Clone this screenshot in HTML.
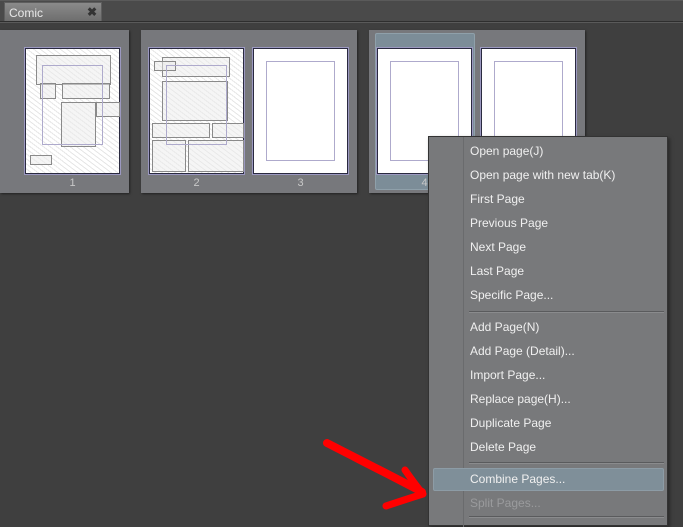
<!DOCTYPE html>
<html><head><style>
*{margin:0;padding:0;box-sizing:border-box}
body{width:683px;height:520px;overflow:hidden;background:#3f3f3f;font-family:"Liberation Sans",sans-serif;position:relative}
.abs{position:absolute}
.tabbar{left:0;top:0;width:683px;height:21px;background:#4a4a4a;border-top:1px solid #5a5a5a}
.tab{left:4px;top:2px;width:98px;height:20px;background:linear-gradient(#8a8a8a,#6e6e6e);border:1px solid #5e5e5e;color:#e8e8e8;font-size:12px;padding:3px 0 0 4px}
.tabline{left:0;top:21px;width:683px;height:2px;background:#2e2e2e;border-bottom:1px solid #5a5a5a}
.spread{background:#77787c;box-shadow:1px 1px 2px #222}
.page{background:#fff;border:1px solid #2a2a40;outline:1px solid #9b98c0}
.inner{position:absolute;left:12px;top:12px;right:12px;bottom:12px;border:1px solid #aeaacc}
.num{color:#c8c8c8;font-size:11px;text-align:center}
.comic{background:repeating-linear-gradient(37deg,#fff 0 3px,#e6e6e6 3px 4px),#fff}
.panel{position:absolute;border:1px solid #8a8a8a;background:rgba(235,235,235,.5)}
.menu{left:428px;top:136px;width:240px;height:390px;background:#78797b;border:1px solid #333;box-shadow:2px 2px 3px #2a2a2a}
.gut{left:34px;top:0;width:1px;height:390px;background:#6a6b6d}
.it{position:absolute;left:41px;color:#f0f0f0;font-size:12px;line-height:24px;height:24px}
.sep{position:absolute;left:40px;width:195px;height:2px;border-top:1px solid #5a5b5d;border-bottom:1px solid #8a8b8d}
</style></head><body>
<div class="abs tabbar"></div>
<div class="abs tab">Comic<span style="position:absolute;right:4px;top:2px;font-size:12px;font-weight:bold;color:#333">✖</span></div>
<div class="abs tabline"></div>

<div class="abs spread" style="left:0;top:30px;width:129px;height:163px"></div>
<div class="abs page comic" style="left:25px;top:48px;width:95px;height:126px">
 <div class="panel" style="left:10px;top:6px;width:75px;height:30px"></div>
 <div class="panel" style="left:14px;top:34px;width:16px;height:16px"></div>
 <div class="panel" style="left:36px;top:34px;width:48px;height:16px"></div>
 <div class="panel" style="left:35px;top:53px;width:35px;height:45px"></div>
 <div class="panel" style="left:70px;top:53px;width:24px;height:15px"></div>
 <div class="panel" style="left:4px;top:106px;width:22px;height:10px"></div>
 <div class="inner" style="left:16px;top:16px;right:16px;bottom:28px"></div>
</div>
<div class="abs num" style="left:25px;top:177px;width:95px">1</div>

<div class="abs spread" style="left:141px;top:30px;width:216px;height:163px"></div>
<div class="abs page comic" style="left:149px;top:48px;width:95px;height:126px">
 <div class="panel" style="left:12px;top:8px;width:68px;height:20px"></div>
 <div class="panel" style="left:4px;top:12px;width:22px;height:10px"></div>
 <div class="panel" style="left:12px;top:32px;width:66px;height:40px"></div>
 <div class="panel" style="left:2px;top:74px;width:58px;height:15px"></div>
 <div class="panel" style="left:62px;top:74px;width:32px;height:15px"></div>
 <div class="panel" style="left:2px;top:91px;width:34px;height:32px"></div>
 <div class="panel" style="left:38px;top:91px;width:56px;height:32px"></div>
 <div class="inner" style="left:16px;top:16px;right:16px;bottom:28px"></div>
</div>
<div class="abs num" style="left:149px;top:177px;width:95px">2</div>
<div class="abs page" style="left:253px;top:48px;width:95px;height:126px"><div class="inner"></div></div>
<div class="abs num" style="left:253px;top:177px;width:95px">3</div>

<div class="abs spread" style="left:369px;top:30px;width:216px;height:163px"></div>
<div class="abs" style="left:375px;top:33px;width:100px;height:157px;background:#7c8d98;border:1px solid #8fa0aa;border-radius:2px"></div>
<div class="abs page" style="left:377px;top:48px;width:95px;height:126px"><div class="inner"></div></div>
<div class="abs num" style="left:377px;top:177px;width:95px">4</div>
<div class="abs page" style="left:481px;top:48px;width:95px;height:126px"><div class="inner"></div></div>

<div class="abs menu">
 <div class="abs gut"></div>
 <div class="it" style="top:2px">Open page(J)</div>
 <div class="it" style="top:26px">Open page with new tab(K)</div>
 <div class="it" style="top:50px">First Page</div>
 <div class="it" style="top:74px">Previous Page</div>
 <div class="it" style="top:98px">Next Page</div>
 <div class="it" style="top:122px">Last Page</div>
 <div class="it" style="top:146px">Specific Page...</div>
 <div class="sep" style="top:174px"></div>
 <div class="it" style="top:178px">Add Page(N)</div>
 <div class="it" style="top:202px">Add Page (Detail)...</div>
 <div class="it" style="top:226px">Import Page...</div>
 <div class="it" style="top:250px">Replace page(H)...</div>
 <div class="it" style="top:274px">Duplicate Page</div>
 <div class="it" style="top:298px">Delete Page</div>
 <div class="sep" style="top:325px"></div>
 <div class="abs" style="left:4px;top:331px;width:231px;height:23px;background:#7f8f99;border:1px solid #8d9ca6;border-radius:2px"></div>
 <div class="it" style="top:330px">Combine Pages...</div>
 <div class="it" style="top:354px;color:#9a9b9d">Split Pages...</div>
 <div class="sep" style="top:379px"></div>
</div>

<svg class="abs" style="left:0;top:0" width="683" height="520">
 <path d="M327 443 C360 460 390 475 422 492" stroke="#f00" stroke-width="8" fill="none" stroke-linecap="round"/>
 <path d="M405 470 C412 480 418 488 423 494 C410 498 398 502 386 506" stroke="#f00" stroke-width="7" fill="none" stroke-linecap="round" stroke-linejoin="round"/>
</svg>
</body></html>
